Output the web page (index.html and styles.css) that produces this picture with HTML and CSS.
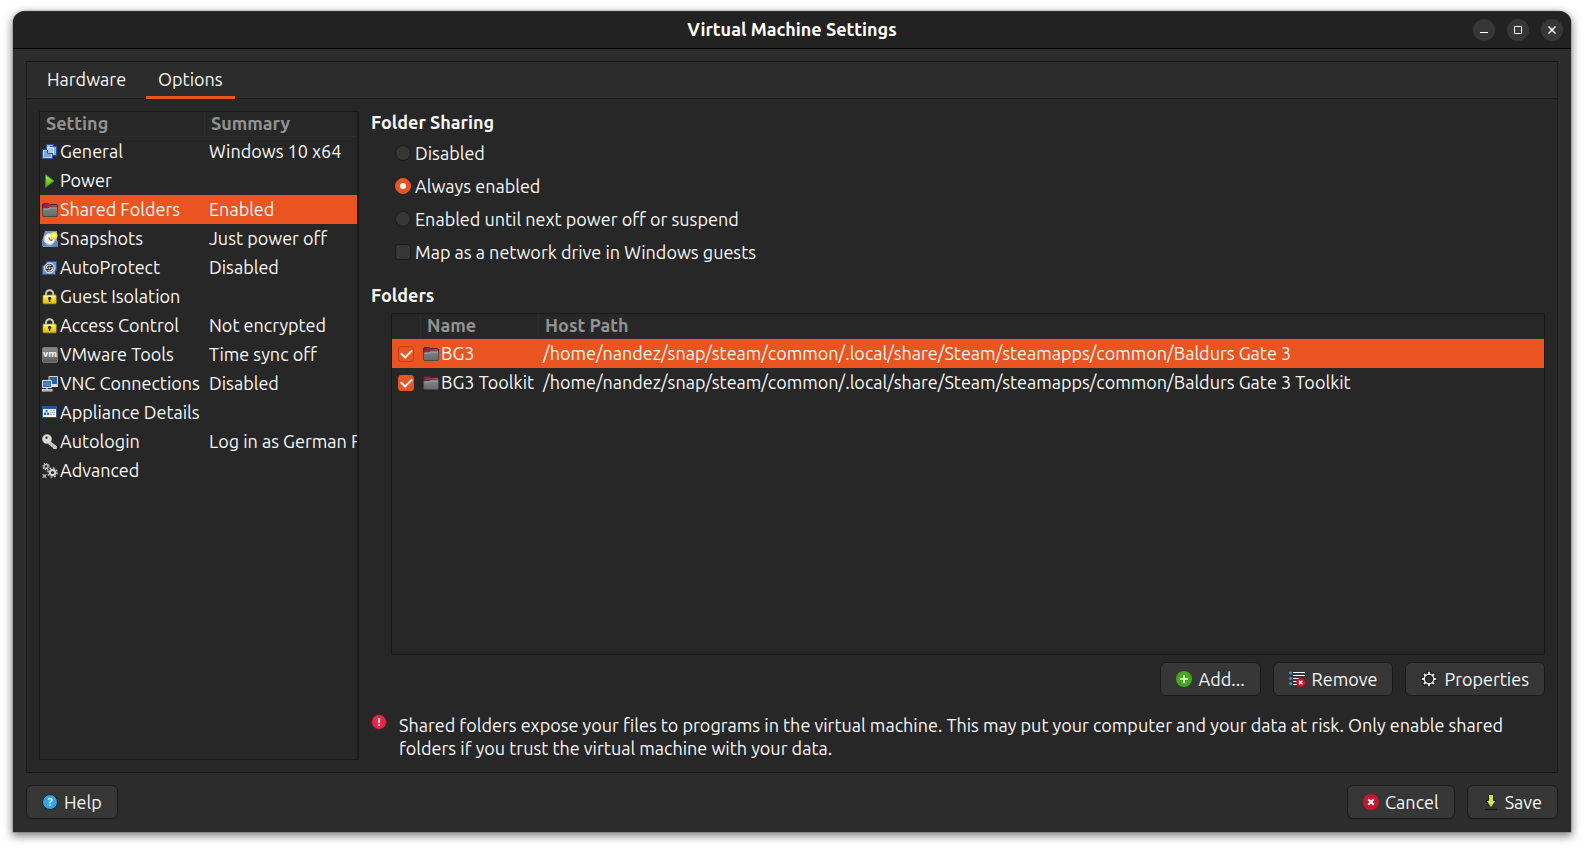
FILE: index.html
```html
<!DOCTYPE html>
<html lang="en">
<head>
<meta charset="utf-8">
<title>Virtual Machine Settings</title>
<link rel="stylesheet" href="styles.css">
</head>
<body>
<svg class="defs" aria-hidden="true">
  <defs>
    <linearGradient id="g-flap" x1="0" y1="0" x2="1" y2="0"><stop offset="0" stop-color="#77244f"/><stop offset=".5" stop-color="#a03048"/><stop offset="1" stop-color="#e0522a"/></linearGradient>
    <linearGradient id="g-front" x1="0" y1="0" x2="0" y2="1"><stop offset="0" stop-color="#858585"/><stop offset="1" stop-color="#6a6a6a"/></linearGradient>
    <linearGradient id="g-gold" x1="0" y1="0" x2="0" y2="1"><stop offset="0" stop-color="#fbf08a"/><stop offset=".5" stop-color="#f2da20"/><stop offset="1" stop-color="#d8bc08"/></linearGradient>
    <linearGradient id="g-vm" x1="0" y1="0" x2="0" y2="1"><stop offset="0" stop-color="#8e8e90"/><stop offset="1" stop-color="#5c5c5e"/></linearGradient>
    <linearGradient id="g-play" x1="0" y1="0" x2="0" y2="1"><stop offset="0" stop-color="#a5ec5c"/><stop offset="1" stop-color="#4cae0c"/></linearGradient>
  </defs>
  <symbol id="i-general" viewBox="0 0 16 16">
    <rect x="4.500" y=".5" width="7" height="8" fill="#9dbce4" stroke="#2c5596"/>
    <rect x="8.500" y="2.500" width="6" height="9" fill="#86addd" stroke="#2c5596"/>
    <rect x=".5" y="5.500" width="10" height="9" fill="#7ba6da" stroke="#2c5596"/>
    <path d="M5.500 3.500h6v6h-6z" fill="#a9c6ea" stroke="#e2eefb"/>
    <path d="M1.500 6.500h4v3h4v4h-8z" fill="none" stroke="#bdd5f2"/>
    <path d="M5.500 6v3.500H11" fill="none" stroke="#2c5596"/>
  </symbol>
  <symbol id="i-power" viewBox="0 0 16 16"><path d="M3.500 1.500v13L12 8z" fill="url(#g-play)" stroke="#3c8a10"/></symbol>
  <symbol id="i-folder" viewBox="0 0 16 16">
    <path d="M.5 3Q.5 1.500 2 1.500h4L7.500 2.500H14q1.500 0 1.500 1.500V9H.5z" fill="url(#g-flap)" stroke="#4a2433"/>
    <path d="M.5 7q0-1 1-1H6l1.500-1h7q1 0 1 1V13q0 1.500-1.500 1.500H2Q.5 14.500 .5 13z" fill="url(#g-front)" stroke="#484848"/>
    <path d="M1.500 7H6L7.500 6H15" fill="none" stroke="#a5a5a5"/>
  </symbol>
  <symbol id="i-snap" viewBox="0 0 16 16">
    <path d="M3 0h12v16H1V7z" fill="#7899c8"/><path d="M0 8h4v7H0zM11 10h5v6h-5z" fill="#5d86bd"/>
    <circle cx="7.500" cy="8" r="5.500" fill="#f4f4ec" stroke="#c5c7c6"/>
    <circle cx="12" cy="4.500" r="3.500" fill="#f4e92d"/><circle cx="12" cy="4.500" r="1.600" fill="#fffdb0"/>
    <path d="M6.800 6.500l1.700 3M9 9.500l1.500-.8" stroke="#4b4b44" stroke-width="1.100" fill="none"/>
  </symbol>
  <symbol id="i-auto" viewBox="0 0 16 16">
    <path d="M4.500 1.500h10v9h-1v4H.5v-9h4z" fill="#6f93c8" stroke="#2c5596"/>
    <circle cx="7.500" cy="8" r="4.800" fill="#303436" stroke="#dfe3e6" stroke-width="1.300"/>
    <path d="M5.200 9a2.500 2.500 0 0 1 4-3M9.800 7a2.500 2.500 0 0 1-4 3" fill="none" stroke="#e8e8e8" stroke-width="1.200"/>
    <circle cx="7.500" cy="8" r="1" fill="#e8e8e8"/>
  </symbol>
  <symbol id="i-lock" viewBox="0 0 16 16">
    <path d="M4 8V4.800a3.600 3.600 0 0 1 7.200 0V8" fill="none" stroke="#c9c9c4" stroke-width="2"/>
    <rect x="1" y="6" width="13.200" height="8.800" rx="1" fill="url(#g-gold)" stroke="#b19a10" stroke-width=".7"/>
    <path d="M2 7.500h11" stroke="#fdf9c0" stroke-width=".8"/>
    <circle cx="7.600" cy="9.300" r="1.600" fill="#332d08"/><path d="M6.800 9.500h1.600V13H6.800z" fill="#332d08"/>
  </symbol>
  <symbol id="i-vnc" viewBox="0 0 16 16">
    <path d="M7 .5h8.500v8H7z" fill="#2d5cab" stroke="#d5d8da"/><path d="M9 9h7v2H9z" fill="#dedede"/>
    <path d="M.5 4.500h9v7h-9z" fill="#3567ba" stroke="#e3e5e6"/><path d="M2 6h6v4H2z" fill="#4c81ce"/>
    <path d="M4 12h2v1H4z" fill="#aaa"/><path d="M0 13h10.500v2.500H0z" fill="#dedede"/><path d="M1 14.300h8.500" stroke="#8b8b8b" stroke-width=".7"/>
  </symbol>
  <symbol id="i-appliance" viewBox="0 0 16 16">
    <path d="M0 1h15v12H0z" fill="#2456a4"/><path d="M1 4h13v8H1z" fill="#fbfbfb"/>
    <path d="M3.500 5h2v2h-2zM2 7.500h2.200V10H2zM5 7.500h2.200V10H5z" fill="#2b67b8"/>
    <path d="M8 5.500h2M11 5.500h2M8 7.500h5M8 9.500h2M11 9.500h2" stroke="#a8a8a8"/>
  </symbol>
  <symbol id="i-key" viewBox="0 0 16 16">
    <path d="M8 7.500l6.500 5-.3 2.200-2.700-.3-.6-1.600-1.500-.4-.7-1.400-2.200-1z" fill="#bcbcbc" stroke="#e6e6e6" stroke-width=".8"/>
    <circle cx="5" cy="5" r="4.600" fill="#dedede" stroke="#b8b8b8" stroke-width=".6"/><circle cx="4.500" cy="3.800" r="1.200" fill="#3b3b3b"/>
  </symbol>
  <symbol id="i-gears" viewBox="0 0 16 16">
    <g fill="none" stroke="#bdbdbd">
      <circle cx="4" cy="3.500" r="2" stroke-width="1.400"/><circle cx="4" cy="3.500" r="3.100" stroke-width="1.200" stroke-dasharray="1.200 1.200"/>
      <circle cx="10.500" cy="9.500" r="2.700" stroke-width="2.200" stroke="#d0d0d0"/><circle cx="10.500" cy="9.500" r="4.600" stroke-width="1.600" stroke-dasharray="1.800 1.800"/>
      <circle cx="2.500" cy="13" r="1.200" stroke-width="1"/><path d="M.5 11l4 4M4.500 11l-4 4" stroke-width="1"/>
    </g>
  </symbol>
  <symbol id="i-add" viewBox="0 0 16 16"><circle cx="8" cy="8" r="8" fill="#45a620"/><path d="M8 4v8M4 8h8" stroke="#fff" stroke-width="1.600"/></symbol>
  <symbol id="i-remove" viewBox="0 0 16 16">
    <path d="M4 1.500h12M4 4.500h12M4 7.500h6M4 10.500h4M4 13.500h4" stroke="#fff"/>
    <g fill="#2f9be0"><circle cx="1.500" cy="2" r="1.500"/><circle cx="1.500" cy="7.500" r="1.500"/><circle cx="1.500" cy="12.500" r="1.500"/></g>
    <circle cx="11.700" cy="11.500" r="4.500" fill="#c8142c"/><path d="M10 9.800l3.400 3.400m0-3.400L10 13.200" stroke="#fff" stroke-width="1.300"/>
  </symbol>
  <symbol id="i-gear" viewBox="0 0 16 16">
    <path d="M8 0v16M0 8h16M2.300 2.300l11.400 11.400M13.700 2.300L2.300 13.700" stroke="#161616" stroke-width="3.600"/>
    <circle cx="8" cy="8" r="6" fill="#161616"/>
    <path d="M8 .8v14.400M.8 8h14.400M3 3l10 10M13 3L3 13" stroke="#eee" stroke-width="1.800"/>
    <circle cx="8" cy="8" r="4.700" fill="#343434" stroke="#eee" stroke-width="1.500"/>
    <circle cx="8" cy="8" r="3.500" fill="none" stroke="#161616"/>
  </symbol>
  <symbol id="i-cancel" viewBox="0 0 16 16"><circle cx="8" cy="8" r="8" fill="#c7162b"/><path d="M5.300 5.300l5.400 5.400m0-5.400l-5.400 5.400" stroke="#fff" stroke-width="2"/></symbol>
  <symbol id="i-save" viewBox="0 0 16 16">
    <path d="M5.500 .5h5v6H13L8 14 3 6.500h2.500z" fill="#c8e650" stroke="#1c1e10"/><path d="M2 15.500h12" stroke="#111"/>
  </symbol>
</svg>

<div class="window">
  <header class="titlebar">
    <h1>Virtual Machine Settings</h1>
    <div class="controls">
      <button type="button" aria-label="Minimize"><svg viewBox="0 0 22 22"><path d="M7 13.500h8"/></svg></button>
      <button type="button" aria-label="Maximize"><svg viewBox="0 0 22 22"><path d="M7.500 7.500h7v7h-7z"/></svg></button>
      <button type="button" aria-label="Close"><svg viewBox="0 0 22 22"><path d="M7.500 7.500l7 7m0-7l-7 7" stroke-width="1.500"/></svg></button>
    </div>
  </header>

  <main class="content">
    <section class="notebook">
      <div class="tabs" role="tablist">
        <button type="button" class="tab" role="tab" aria-selected="false">Hardware</button>
        <button type="button" class="tab" role="tab" aria-selected="true">Options</button>
      </div>
      <div class="page" role="tabpanel" aria-label="Options">
        <div class="list settings">
          <table>
            <thead><tr><th>Setting</th><th>Summary</th></tr></thead>
            <tbody>
              <tr><td><span class="cell"><svg class="icon"><use href="#i-general"/></svg>General</span></td><td>Windows 10 x64</td></tr>
              <tr><td><span class="cell"><svg class="icon"><use href="#i-power"/></svg>Power</span></td><td></td></tr>
              <tr class="selected"><td><span class="cell"><svg class="icon"><use href="#i-folder"/></svg>Shared Folders</span></td><td>Enabled</td></tr>
              <tr><td><span class="cell"><svg class="icon"><use href="#i-snap"/></svg>Snapshots</span></td><td>Just power off</td></tr>
              <tr><td><span class="cell"><svg class="icon"><use href="#i-auto"/></svg>AutoProtect</span></td><td>Disabled</td></tr>
              <tr><td><span class="cell"><svg class="icon"><use href="#i-lock"/></svg>Guest Isolation</span></td><td></td></tr>
              <tr><td><span class="cell"><svg class="icon"><use href="#i-lock"/></svg>Access Control</span></td><td>Not encrypted</td></tr>
              <tr><td><span class="cell"><svg class="icon" viewBox="0 0 16 16" aria-hidden="true"><rect x=".5" y=".5" width="15" height="15" rx="1.500" fill="url(#g-vm)" stroke="#77777a"/><text x="8" y="10" text-anchor="middle" class="glyph-vm">vm</text></svg>VMware Tools</span></td><td>Time sync off</td></tr>
              <tr><td><span class="cell"><svg class="icon"><use href="#i-vnc"/></svg>VNC Connections</span></td><td>Disabled</td></tr>
              <tr><td><span class="cell"><svg class="icon"><use href="#i-appliance"/></svg>Appliance Details</span></td><td></td></tr>
              <tr><td><span class="cell"><svg class="icon"><use href="#i-key"/></svg>Autologin</span></td><td>Log in as German F</td></tr>
              <tr><td><span class="cell"><svg class="icon"><use href="#i-gears"/></svg>Advanced</span></td><td></td></tr>
            </tbody>
          </table>
        </div>

        <div class="panel">
          <h2>Folder Sharing</h2>
          <div class="choices">
            <label><input type="radio" name="sharing">Disabled</label>
            <label><input type="radio" name="sharing" checked>Always enabled</label>
            <label><input type="radio" name="sharing">Enabled until next power off or suspend</label>
            <label><input type="checkbox">Map as a network drive in Windows guests</label>
          </div>
          <h2 class="folders-title">Folders</h2>
          <div class="list folders">
            <table>
              <thead><tr><th></th><th>Name</th><th>Host Path</th></tr></thead>
              <tbody>
                <tr class="selected"><td><input type="checkbox" aria-label="Enable BG3" checked></td><td><span class="cell"><svg class="icon"><use href="#i-folder"/></svg>BG3</span></td><td>/home/nandez/snap/steam/common/.local/share/Steam/steamapps/common/Baldurs Gate 3</td></tr>
                <tr><td><input type="checkbox" aria-label="Enable BG3 Toolkit" checked></td><td><span class="cell"><svg class="icon"><use href="#i-folder"/></svg>BG3 Toolkit</span></td><td>/home/nandez/snap/steam/common/.local/share/Steam/steamapps/common/Baldurs Gate 3 Toolkit</td></tr>
              </tbody>
            </table>
          </div>
          <div class="actions">
            <button type="button" class="btn"><svg class="icon"><use href="#i-add"/></svg>Add...</button>
            <button type="button" class="btn"><svg class="icon"><use href="#i-remove"/></svg>Remove</button>
            <button type="button" class="btn"><svg class="icon"><use href="#i-gear"/></svg>Properties</button>
          </div>
          <div class="notice">
            <svg class="icon" viewBox="0 0 16 16" aria-hidden="true"><circle cx="8" cy="8" r="7.200" fill="#e72545" stroke="#9a1830" stroke-width=".6"/><text x="8" y="12" text-anchor="middle" class="glyph-mark">!</text></svg>
            <p>Shared folders expose your files to programs in the virtual machine. This may put your computer and your data at risk. Only enable shared folders if you trust the virtual machine with your data.</p>
          </div>
        </div>
      </div>
    </section>

    <footer class="footer">
      <button type="button" class="btn help"><svg class="icon" viewBox="0 0 16 16" aria-hidden="true"><circle cx="8" cy="8" r="7.500" fill="#35a2e6" stroke="#17222a"/><text x="8" y="12" text-anchor="middle" class="glyph-mark">?</text></svg>Help</button>
      <button type="button" class="btn"><svg class="icon"><use href="#i-cancel"/></svg>Cancel</button>
      <button type="button" class="btn"><svg class="icon"><use href="#i-save"/></svg>Save</button>
    </footer>
  </main>
</div>
</body>
</html>
```

FILE: styles.css
```css
* { box-sizing: border-box; }

body {
  margin: 0;
  min-height: 100vh;
  padding: 11px 13px 16px;
  display: flex;
  background: #fff;
  color: #f7f7f7;
  font: 18px/23px Ubuntu, "Noto Sans", sans-serif;
}

button { font: inherit; color: inherit; }
h1, h2, p { margin: 0; }
h1, h2 { font-size: 18px; line-height: 22px; font-weight: 700; }

.defs { position: absolute; width: 0; height: 0; }
.icon { width: 16px; height: 16px; flex: none; }
.glyph-vm { font: 700 9px "Open Sans", sans-serif; fill: #fff; }
.glyph-mark { font: 700 11px "Open Sans", sans-serif; fill: #dff1fb; }

.window {
  flex: 1;
  min-width: 0;
  display: flex;
  flex-direction: column;
  background: #2c2c2c;
  border-radius: 12px 12px 0 0;
  box-shadow: 0 3px 9px 1px rgba(0, 0, 0, .5), 0 0 0 1px rgba(0, 0, 0, .1);
}

.titlebar {
  height: 38px;
  display: grid;
  grid-template-columns: 1fr auto 1fr;
  align-items: center;
  padding: 0 8px;
  background: #222;
  border-top: 1px solid #303030;
  border-bottom: 1px solid #000;
  border-radius: 12px 12px 0 0;
}
.titlebar h1 { grid-column: 2; padding-bottom: 2px; color: #fff; }
.controls { display: flex; justify-content: flex-end; gap: 12px; }
.controls button {
  width: 22px;
  height: 22px;
  padding: 0;
  border: 0;
  border-radius: 50%;
  background: #373737;
}
.controls svg { display: block; fill: none; stroke: #fff; }

.content { flex: 1; display: flex; flex-direction: column; gap: 12px; padding: 12px 13px 13px; }

.notebook { flex: 1; display: flex; flex-direction: column; border: 1px solid #1a1a1a; background: #272727; }
.tabs { display: flex; gap: 8px; height: 37px; padding: 0 8px; background: #2c2c2c; border-bottom: 1px solid #1a1a1a; }
.tab { height: 37px; padding: 0 12px; border: 0; border-bottom: 3px solid transparent; background: none; }
.tab[aria-selected="true"] { border-bottom-color: #e95420; }

.page { flex: 1; display: flex; gap: 12px; padding: 12px; }

.list { border: 1px solid #1a1a1a; background: #272727; overflow: hidden; }
.list table { width: 100%; table-layout: fixed; border-collapse: separate; border-spacing: 0; }
.list th {
  height: 25px;
  padding: 0 6px;
  border-right: 1px solid #2d2d2d;
  border-bottom: 1px solid #2d2d2d;
  color: #929292;
  font-weight: 700;
  line-height: 22px;
  text-align: left;
  vertical-align: top;
}
.list th:last-child { border-right: 0; }
.list td { height: 29px; padding: 0 2px; white-space: nowrap; overflow: hidden; }
.selected td { background: #e95420; }
.cell { display: flex; align-items: center; gap: 2px; }

.settings { width: 320px; flex: none; border-right-width: 2px; }
.settings th:first-child { width: 165px; }
.settings td:last-child { padding: 0 0 0 4px; }

.panel { flex: 1; min-width: 0; display: flex; flex-direction: column; }
.choices { display: flex; flex-direction: column; gap: 9px; padding: 8px 0 0 24px; }
.choices label { display: flex; align-items: center; gap: 4px; width: max-content; line-height: 24px; }

input {
  appearance: none;
  display: grid;
  place-items: center;
  width: 16px;
  height: 16px;
  margin: 0;
  border: 1px solid #1a1a1a;
  background: #363636;
}
input[type="radio"] { border-radius: 50%; }
input[type="checkbox"] { border-radius: 3px; }
input:checked { background: #e95420; border-color: #e95420; }
input[type="radio"]:checked::after { content: ""; width: 6px; height: 6px; border-radius: 50%; background: #fff; }
input[type="checkbox"]:checked::after {
  content: "";
  width: 9px;
  height: 5px;
  margin-bottom: 3px;
  border: solid #fff;
  border-width: 0 0 2px 2px;
  transform: rotate(-45deg);
}
.selected input:checked { border-color: #c14317; }

.folders-title { padding-top: 20px; }
.folders { flex: 1; margin: 7px 0 0 20px; }
.folders th:first-child { width: 29px; }
.folders th:nth-child(2) { width: 118px; }
.folders td:first-child { padding-left: 6px; }
.folders td:last-child { padding-left: 4px; }

.actions { display: flex; justify-content: flex-end; gap: 12px; padding-top: 7px; }
.btn {
  display: flex;
  align-items: center;
  gap: 6px;
  height: 34px;
  padding: 0 15px;
  border: 1px solid #1a1a1a;
  border-radius: 6px;
  background: #363636;
}
.actions .btn { gap: 7px; }

.notice { display: flex; gap: 12px; padding: 18px 24px 0 0; }

.footer { display: flex; gap: 12px; }
.help { margin-right: auto; }
```
